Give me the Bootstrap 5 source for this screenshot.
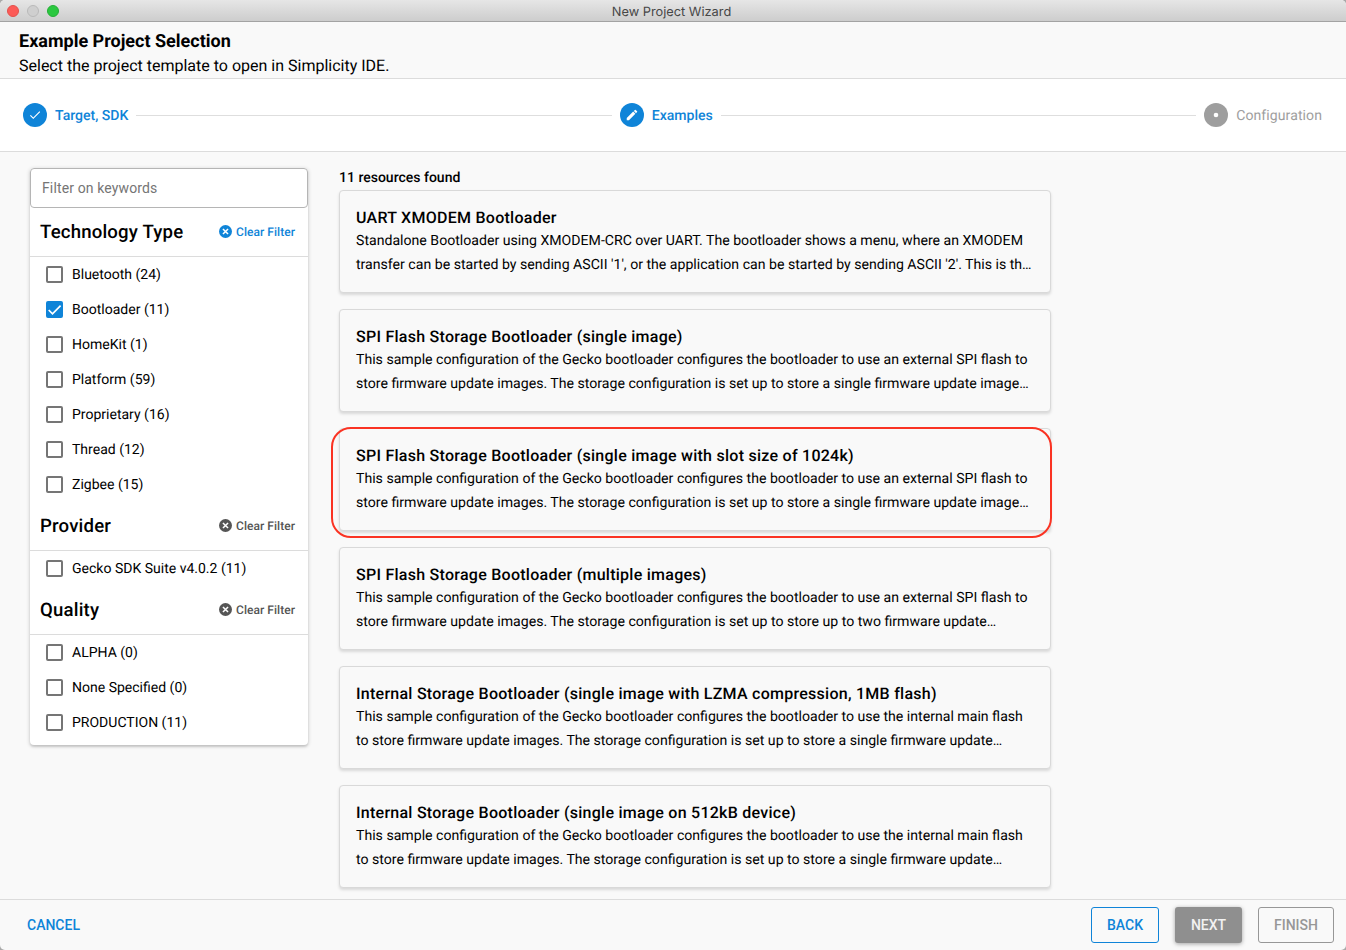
<!DOCTYPE html>
<html lang="en">
<head>
<meta charset="utf-8">
<title>New Project Wizard</title>
<link href="https://cdn.jsdelivr.net/npm/bootstrap@5.3.0/dist/css/bootstrap.min.css" rel="stylesheet">
<script src="https://cdn.jsdelivr.net/npm/bootstrap@5.3.0/dist/js/bootstrap.bundle.min.js"></script>
<style>
:root{--blue:#0f84d8;--line:#dcdcdc}
body{background:#a9a9a9;font-family:Roboto,"Liberation Sans",sans-serif;font-size:14.1px;line-height:20px;color:#000;overflow:hidden;text-rendering:geometricPrecision}
.window{height:950px;background:#f9f9f9;border-radius:5px;overflow:hidden}
.titlebar{height:22px;background:linear-gradient(#e6e6e6,#cdcdcd);border-bottom:1px solid #a3a3a3;padding-left:7px;position:relative}
.light{width:12px;height:12px;border-radius:50%;border:1px solid}
.light-close{background:#fc5b57;border-color:#e2514c}
.light-min{background:#cfcfcf;border-color:#b9b9b9}
.light-zoom{background:#2bc840;border-color:#25ae36}
.titlebar-text{position:absolute;inset:0;padding:1px 3px 0 0;font:12.8px/24px Inter,sans-serif;letter-spacing:0;color:#474747}
.page-head{height:57px;padding:8px 19px 0;border-bottom:1px solid var(--line)}
.page-head h1{font-size:18px;line-height:24px;font-weight:700;letter-spacing:0;margin:0}
.page-head p{font-size:16px;line-height:23px;margin:0}
.stepper{height:73px;background:#fff;border-bottom:1px solid var(--line);padding:0 24px 0 23px;gap:8px}
.step-dot{width:24px;height:24px;border-radius:50%;background:var(--blue);flex:none}
.step-name{color:var(--blue);font-weight:500;white-space:nowrap;line-height:22px;padding-top:2px;font-size:14.05px}
.step-rule{height:1px;background:#dedede}
.off .step-dot{background:#9e9e9e}
.off .step-name{color:#9e9e9e;font-weight:400;letter-spacing:.08px}
.workspace{height:747px;padding:16px 0 0 30px;overflow:hidden}
.filters{width:278px;height:577px;background:#fff;border-radius:4px;box-shadow:0 1px 4px rgba(0,0,0,.2),0 2px 2px rgba(0,0,0,.1);flex:none}
.filters .form-control{height:40px;border:1px solid #b5b5b5;border-radius:4px;padding:0 11px;font-size:14px;letter-spacing:.13px;color:#000}
.filters .form-control::placeholder{color:#757575}
.group-head{height:49px;border-bottom:1px solid var(--line);padding:0 13px 1px 10px}
.group-head h2{font-size:18.6px;line-height:24px;font-weight:500;letter-spacing:.18px;margin:0}
.clear{font-size:12px;font-weight:500;color:#555;gap:4px;letter-spacing:.04px}
.clear.on{color:var(--blue)}
.pick{height:35px;padding-left:16px;gap:9px;font-size:14.03px}
.pick .form-check-input{width:17px;height:17px;margin:0;border:2px solid #757575;border-radius:2px;flex:none;background-color:#fff}
.pick .form-check-input:checked{background-color:var(--blue);border-color:var(--blue);background-size:17px;background-position:center;background-image:url("data:image/svg+xml,%3csvg xmlns='http://www.w3.org/2000/svg' viewBox='0 0 17 17'%3e%3cpath fill='none' stroke='%23fff' stroke-width='1.7' d='M2.7 9l3.8 3.8L14.6 4.6'/%3e%3c/svg%3e")}
.results{width:712px;margin-left:31px}
.found{line-height:20px;height:22px;font-weight:500;font-size:14px}
.resource{height:103px;border:1px solid #d9d9d9;border-radius:4px;background:#f9f9f9;padding:16px;margin-bottom:16px;box-shadow:0 2px 3px rgba(0,0,0,.13);white-space:nowrap}
.resource h3{font-size:16px;line-height:21px;font-weight:500;letter-spacing:.26px;margin:0}
.resource p{font-size:14.125px;line-height:24px;margin:0;padding-top:1px}
.marker{position:absolute;left:-9px;top:-2px;width:721px;height:111px;border:2px solid #fa3323;border-radius:20px}
.footer-bar{height:51px;border-top:1px solid var(--line);padding:0 12px 0 27px;gap:16px}
.footer-bar .btn{height:36px;padding:0;font-size:14px;font-weight:500;line-height:20px;border-radius:3px}
.btn-cancel{color:var(--blue);border:0}
.btn-back{width:68px;color:var(--blue);border:1px solid var(--blue)}
.btn-next{width:67px;color:#f2f2f2;background:#8f8f8f;border:0;box-shadow:0 1px 4px rgba(0,0,0,.35)}
.btn-finish{width:76px;color:#979797;border:1px solid #979797}
</style>
</head>
<body>
<svg class="d-none">
  <symbol id="clear-icon" viewBox="0 0 24 24"><path fill="currentColor" d="M12 0a12 12 0 1 0 0 24 12 12 0 0 0 0-24z"/><path stroke="#fff" stroke-width="2.8" d="M7.3 7.3l9.4 9.4M16.7 7.3l-9.4 9.4"/></symbol>
</svg>
<div class="window d-flex flex-column">
  <div class="titlebar d-flex align-items-center gap-2">
    <span class="light light-close"></span><span class="light light-min"></span><span class="light light-zoom"></span>
    <div class="titlebar-text text-center">New Project Wizard</div>
  </div>
  <header class="page-head">
    <h1>Example Project Selection</h1>
    <p>Select the project template to open in Simplicity IDE.</p>
  </header>
  <nav class="stepper d-flex align-items-center">
    <div class="d-flex align-items-center gap-2">
      <span class="step-dot d-flex align-items-center justify-content-center"><svg width="14" height="14" viewBox="0 0 24 24" fill="#fff"><path d="M9 16.2L4.8 12l-1.4 1.4L9 19 21 7l-1.4-1.4z"/></svg></span>
      <span class="step-name">Target, SDK</span>
    </div>
    <span class="step-rule flex-fill"></span>
    <div class="d-flex align-items-center gap-2">
      <span class="step-dot d-flex align-items-center justify-content-center"><svg width="14" height="14" viewBox="0 0 24 24" fill="#fff"><path d="M3 17.25V21h3.75L17.81 9.94l-3.75-3.75zM20.71 7.04a1 1 0 0 0 0-1.41l-2.34-2.34a1 1 0 0 0-1.41 0l-1.83 1.83 3.75 3.75z"/></svg></span>
      <span class="step-name">Examples</span>
    </div>
    <span class="step-rule flex-fill"></span>
    <div class="off d-flex align-items-center gap-2">
      <span class="step-dot d-flex align-items-center justify-content-center"><svg width="6" height="6"><circle cx="3" cy="3" r="2.3" fill="#fff"/></svg></span>
      <span class="step-name">Configuration</span>
    </div>
  </nav>
  <main class="workspace d-flex align-items-start">
    <aside class="filters">
      <input class="form-control" type="text" placeholder="Filter on keywords">
      <div class="group-head d-flex align-items-center justify-content-between"><h2>Technology Type</h2><span class="clear on d-flex align-items-center"><svg width="13" height="13"><use href="#clear-icon"/></svg>Clear Filter</span></div>
      <label class="pick d-flex align-items-center"><input class="form-check-input" type="checkbox"><span>Bluetooth (24)</span></label>
      <label class="pick d-flex align-items-center"><input class="form-check-input" type="checkbox" checked><span>Bootloader (11)</span></label>
      <label class="pick d-flex align-items-center"><input class="form-check-input" type="checkbox"><span>HomeKit (1)</span></label>
      <label class="pick d-flex align-items-center"><input class="form-check-input" type="checkbox"><span>Platform (59)</span></label>
      <label class="pick d-flex align-items-center"><input class="form-check-input" type="checkbox"><span>Proprietary (16)</span></label>
      <label class="pick d-flex align-items-center"><input class="form-check-input" type="checkbox"><span>Thread (12)</span></label>
      <label class="pick d-flex align-items-center"><input class="form-check-input" type="checkbox"><span>Zigbee (15)</span></label>
      <div class="group-head d-flex align-items-center justify-content-between"><h2>Provider</h2><span class="clear d-flex align-items-center"><svg width="13" height="13"><use href="#clear-icon"/></svg>Clear Filter</span></div>
      <label class="pick d-flex align-items-center"><input class="form-check-input" type="checkbox"><span>Gecko SDK Suite v4.0.2 (11)</span></label>
      <div class="group-head d-flex align-items-center justify-content-between"><h2>Quality</h2><span class="clear d-flex align-items-center"><svg width="13" height="13"><use href="#clear-icon"/></svg>Clear Filter</span></div>
      <label class="pick d-flex align-items-center"><input class="form-check-input" type="checkbox"><span>ALPHA (0)</span></label>
      <label class="pick d-flex align-items-center"><input class="form-check-input" type="checkbox"><span>None Specified (0)</span></label>
      <label class="pick d-flex align-items-center"><input class="form-check-input" type="checkbox"><span>PRODUCTION (11)</span></label>
    </aside>
    <section class="results">
      <div class="found">11 resources found</div>
      <article class="resource"><h3>UART XMODEM Bootloader</h3><p>Standalone Bootloader using XMODEM-CRC over UART. The bootloader shows a menu, where an XMODEM<br>transfer can be started by sending ASCII '1', or the application can be started by sending ASCII '2'. This is th…</p></article>
      <article class="resource"><h3>SPI Flash Storage Bootloader (single image)</h3><p>This sample configuration of the Gecko bootloader configures the bootloader to use an external SPI flash to<br>store firmware update images. The storage configuration is set up to store a single firmware update image…</p></article>
      <article class="resource position-relative"><h3>SPI Flash Storage Bootloader (single image with slot size of 1024k)</h3><p>This sample configuration of the Gecko bootloader configures the bootloader to use an external SPI flash to<br>store firmware update images. The storage configuration is set up to store a single firmware update image…</p><span class="marker"></span></article>
      <article class="resource"><h3>SPI Flash Storage Bootloader (multiple images)</h3><p>This sample configuration of the Gecko bootloader configures the bootloader to use an external SPI flash to<br>store firmware update images. The storage configuration is set up to store up to two firmware update…</p></article>
      <article class="resource"><h3>Internal Storage Bootloader (single image with LZMA compression, 1MB flash)</h3><p>This sample configuration of the Gecko bootloader configures the bootloader to use the internal main flash<br>to store firmware update images. The storage configuration is set up to store a single firmware update…</p></article>
      <article class="resource"><h3>Internal Storage Bootloader (single image on 512kB device)</h3><p>This sample configuration of the Gecko bootloader configures the bootloader to use the internal main flash<br>to store firmware update images. The storage configuration is set up to store a single firmware update…</p></article>
    </section>
  </main>
  <footer class="footer-bar d-flex align-items-center">
    <button class="btn btn-cancel me-auto">CANCEL</button>
    <button class="btn btn-back">BACK</button>
    <button class="btn btn-next">NEXT</button>
    <button class="btn btn-finish">FINISH</button>
  </footer>
</div>
</body>
</html>
